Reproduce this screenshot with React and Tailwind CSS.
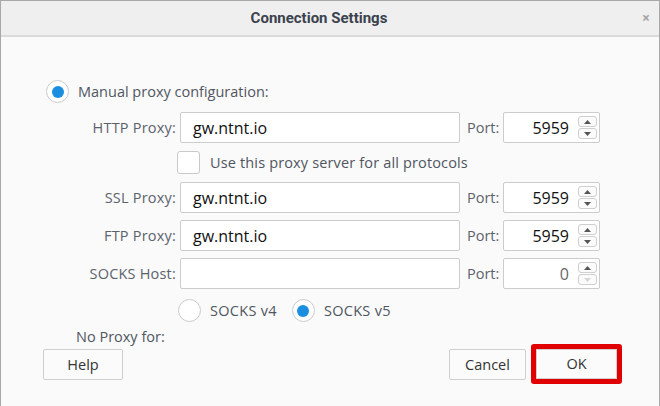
import React from "react";

const font = { fontFamily: "'Open Sans', 'Noto Sans', sans-serif" };

function Radio({ checked }) {
  return (
    <span className="flex h-[23px] w-[23px] shrink-0 items-center justify-center rounded-full border border-[#cbcbcb] bg-white">
      {checked && <span className="h-[12px] w-[12px] rounded-full bg-[#1b8ee0]" />}
    </span>
  );
}

function Spinner({ disabledDown }) {
  return (
    <div className="flex flex-col gap-[1px]">
      <span className="flex h-[11px] w-[19px] items-center justify-center rounded-[3px] border border-[#cfcfcf] bg-[#fbfbfb]">
        <svg width="7" height="4" viewBox="0 0 7 4"><path d="M0 4 L3.5 0 L7 4 Z" fill="#555" /></svg>
      </span>
      <span className="flex h-[11px] w-[19px] items-center justify-center rounded-[3px] border border-[#cfcfcf] bg-[#fbfbfb]">
        <svg width="7" height="4" viewBox="0 0 7 4"><path d="M0 0 L3.5 4 L7 0 Z" fill={disabledDown ? "#d6d6d6" : "#555"} /></svg>
      </span>
    </div>
  );
}

function ProxyRow({ label, value, port, mt, portGray, disabledDown }) {
  return (
    <div className={`flex h-[31px] items-center ${mt}`}>
      <div className="w-[179px] pr-[4px] text-right text-[14.5px] tracking-[0.2px] text-[#5c626c]">{label}</div>
      <div className="flex h-[31px] w-[280px] items-center rounded-[2px] border border-[#cccccc] bg-white pl-[12px] text-[16px] text-[#111]">
        {value}
      </div>
      <div className="ml-[7px] w-[36px] text-[14.5px] text-[#5c626c]">Port:</div>
      <div className="flex h-[31px] w-[97px] items-center justify-end gap-[9px] rounded-[2px] border border-[#cccccc] bg-white pr-[2px]">
        <span className={`text-[16px] ${portGray ? "text-[#666]" : "text-[#111]"}`}>{port}</span>
        <Spinner disabledDown={disabledDown} />
      </div>
    </div>
  );
}

export default function App() {
  return (
    <div className="h-[406px] w-[660px] overflow-hidden border-x border-t border-[#a8a8a8] bg-[#fafafa]" style={font}>
      {/* title bar */}
      <div className="flex h-[36px] items-center border-b-2 border-[#dadada] bg-[#efefef]">
        <div className="flex-1 pr-[5px] text-center text-[15px] font-bold text-[#3b424e]" style={{ fontFamily: "Roboto, sans-serif" }}>
          Connection Settings
        </div>
        <div className="w-[17px] text-[14px] font-bold leading-none text-[#a3a3a3]">×</div>
      </div>

      <div className="pt-[43px]">
        <div className="flex items-center gap-[9px] pl-[45px]">
          <Radio checked />
          <span className="text-[14.5px] text-[#50565f]">Manual proxy configuration:</span>
        </div>

        <ProxyRow label="HTTP Proxy:" value="gw.ntnt.io" port="5959" mt="mt-[9px]" />

        <div className="mt-[8px] flex items-center gap-[10px] pl-[176px]">
          <span className="h-[23px] w-[23px] rounded-[3px] border border-[#c9c9c9] bg-white" />
          <span className="text-[14.5px] tracking-[0.15px] text-[#50565f]">Use this proxy server for all protocols</span>
        </div>

        <ProxyRow label="SSL Proxy:" value="gw.ntnt.io" port="5959" mt="mt-[8px]" />
        <ProxyRow label="FTP Proxy:" value="gw.ntnt.io" port="5959" mt="mt-[7px]" />
        <ProxyRow label="SOCKS Host:" value="" port="0" mt="mt-[7px]" portGray disabledDown />

        <div className="mt-[10px] flex items-center pl-[177px]">
          <Radio />
          <span className="ml-[9px] text-[14.5px] tracking-[0.3px] text-[#50565f]">SOCKS v4</span>
          <span className="ml-[15px]"><Radio checked /></span>
          <span className="ml-[9px] text-[14.5px] tracking-[0.3px] text-[#50565f]">SOCKS v5</span>
        </div>

        <div className="mt-[5px] pl-[75px] text-[14.5px] leading-[20px] text-[#50565f]">No Proxy for:</div>

        <div className="mt-[-3px] flex items-center pl-[42px] pr-[37px]">
          <button className="mt-[1px] h-[31px] w-[80px] rounded-[2px] border border-[#cfcfcf] bg-[#fbfbfb] text-[14.5px] text-[#333]">
            Help
          </button>
          <div className="flex-1" />
          <button className="mt-[1px] h-[31px] w-[77px] rounded-[2px] border border-[#cfcfcf] bg-[#fbfbfb] text-[14.5px] text-[#333]">
            Cancel
          </button>
          <div className="ml-[5px] rounded-[3px] border-[5px] border-[#e00000]">
            <button className="block h-[30px] w-[81px] border border-[#cfcfcf] bg-[#fbfbfb] text-[14.5px] text-[#333]">
              OK
            </button>
          </div>
        </div>
      </div>
    </div>
  );
}
